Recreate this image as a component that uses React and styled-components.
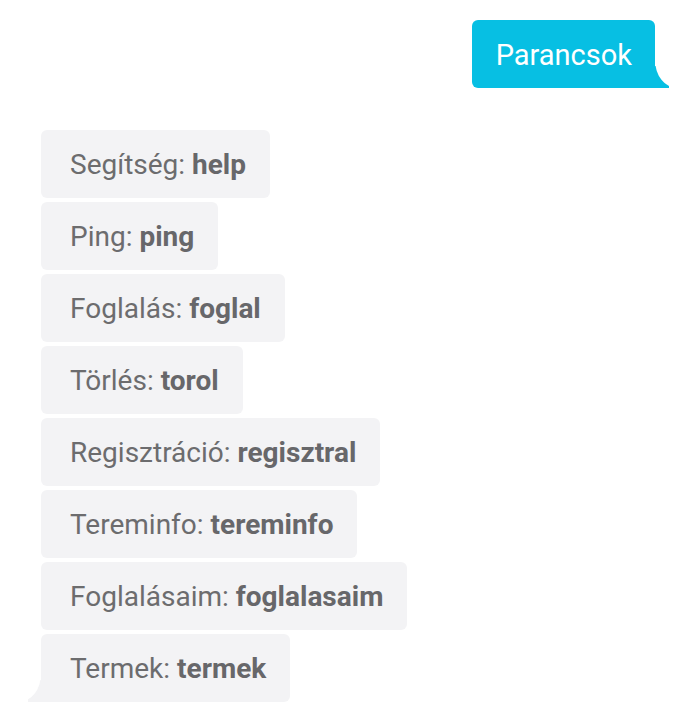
import React from "react";
import styled, { createGlobalStyle } from "styled-components";

const Global = createGlobalStyle`
  html, body { margin: 0; padding: 0; background: #ffffff; }
  body { font-family: Roboto, "Noto Sans", "Liberation Sans", sans-serif; }
`;

const Page = styled.div`
  display: flex;
  flex-direction: column;
  padding: 20px 45px 12px 41px;
`;

const Outgoing = styled.div`
  align-self: flex-end;
  position: relative;
  background: #07bfe3;
  color: #ffffff;
  font-size: 29px;
  line-height: 66px;
  height: 68px;
  box-sizing: border-box;
  padding: 2px 23px 0 24px;
  border-radius: 6px 6px 0 6px;
  &::before {
    content: "";
    position: absolute;
    right: -14px;
    bottom: 0;
    width: 16px;
    height: 22px;
    background: #07bfe3;
  }
  &::after {
    content: "";
    position: absolute;
    right: -28px;
    bottom: 0;
    width: 28px;
    height: 40px;
    background: #ffffff;
    border-bottom-left-radius: 22px 28px;
  }
`;

const List = styled.div`
  margin-top: 42px;
  display: flex;
  flex-direction: column;
  align-items: flex-start;
  gap: 4px;
`;

const Bubble = styled.div`
  position: relative;
  background: #f3f3f5;
  color: #6c6c6e;
  font-size: 28px;
  height: 68px;
  box-sizing: border-box;
  line-height: 66px;
  padding: 2px 24px 0 29px;
  border-radius: ${(p) => (p.$last ? "6px 6px 6px 0" : "6px")};
  b { font-weight: 700; color: #67676a; }
  ${(p) =>
    p.$last &&
    `
    &::before {
      content: "";
      position: absolute;
      left: -13px;
      bottom: 0;
      width: 15px;
      height: 22px;
      background: #f3f3f5;
    }
    &::after {
      content: "";
      position: absolute;
      left: -28px;
      bottom: 0;
      width: 28px;
      height: 40px;
      background: #ffffff;
      border-bottom-right-radius: 22px 28px;
    }
  `}
`;

const commands = [
  ["Segítség", "help"],
  ["Ping", "ping"],
  ["Foglalás", "foglal"],
  ["Törlés", "torol"],
  ["Regisztráció", "regisztral"],
  ["Tereminfo", "tereminfo"],
  ["Foglalásaim", "foglalasaim"],
  ["Termek", "termek"],
];

export default function App() {
  return (
    <Page>
      <Global />
      <Outgoing>Parancsok</Outgoing>
      <List>
        {commands.map(([label, cmd], i) => (
          <Bubble key={cmd} $last={i === commands.length - 1}>
            {label}: <b>{cmd}</b>
          </Bubble>
        ))}
      </List>
    </Page>
  );
}
